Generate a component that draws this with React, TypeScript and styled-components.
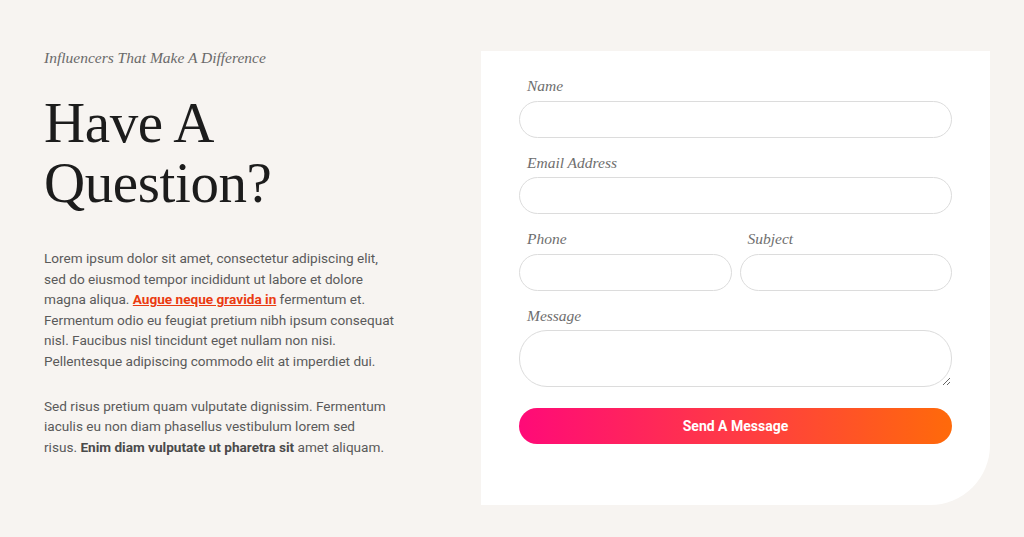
import styled, { createGlobalStyle } from "styled-components";

// page basics
const GlobalStyle = createGlobalStyle`
    body {
        margin: 0;
        background: #f7f4f1;
    }
    * { box-sizing: border-box; }
`;

const Page = styled.div`
    display: flex;
    align-items: flex-start;
    justify-content: space-between;
    width: 1024px;
    height: 537px;
    padding: 51px 34px 0 44px;
`;

const Intro = styled.div`
    width: 390px;
    margin-top: -2px;
`;

const Eyebrow = styled.div`
    font-family: "Liberation Serif", serif;
    font-style: italic;
    font-size: 15.5px;
    line-height: 18px;
    color: #6a6a6a;
`;

const Heading = styled.h1`
    margin: 26px 0 0;
    font-family: "Liberation Serif", serif;
    font-weight: 400;
    font-size: 57px;
    line-height: 60px;
    color: #1c1c1c;
    letter-spacing: -0.4px;
`;

const Text = styled.p<{ gap?: number }>`
    margin: ${(p) => p.gap ?? 0}px 0 0;
    font-family: Roboto, "Liberation Sans", sans-serif;
    font-size: 13.6px;
    line-height: 20.6px;
    color: #5a5a5a;
    white-space: nowrap;

    a {
        color: #ea3a10;
        font-weight: 700;
        text-decoration: underline;
    }
    strong {
        font-weight: 700;
        color: #4a4a4a;
    }
`;

const Card = styled.form`
    width: 509px;
    height: 454px;
    background: #ffffff;
    border-bottom-right-radius: 60px;
    padding: 24px 38px 0 38px;
    display: flex;
    flex-direction: column;
    gap: 14px;
`;

const Row = styled.div`
    display: grid;
    grid-template-columns: 1fr 1fr;
    gap: 8px;
`;

const Field = styled.label`
    display: flex;
    flex-direction: column;
`;

const Label = styled.span`
    padding-left: 8px;
    margin-bottom: 3px;
    font-family: "Liberation Serif", serif;
    font-style: italic;
    font-size: 15.5px;
    line-height: 22.5px;
    color: #6e6e6e;
`;

const Input = styled.input`
    height: 37px;
    width: 100%;
    border: 1px solid #dcdcdc;
    border-radius: 19px;
    background: #fff;
    outline: none;
    padding: 0 16px;
`;

const TextArea = styled.textarea`
    height: 57px;
    width: 100%;
    border: 1px solid #dcdcdc;
    border-radius: 28px;
    background: #fff;
    outline: none;
    padding: 10px 16px;
    resize: vertical;
`;

const SendButton = styled.button`
    margin-top: 7px;
    height: 36px;
    border: none;
    border-radius: 18px;
    background: linear-gradient(90deg, #ff0a78 0%, #ff3a45 50%, #ff6a0a 100%);
    color: #fff;
    font-family: Roboto, "Liberation Sans", sans-serif;
    font-weight: 700;
    font-size: 14px;
    cursor: pointer;
`;

const App: React.FC = () => {
    return (
        <>
            <GlobalStyle />
            <Page>
                <Intro>
                    <Eyebrow>Influencers That Make A Difference</Eyebrow>
                    <Heading>
                        Have A
                        <br />
                        Question?
                    </Heading>
                    <Text gap={35}>
                        Lorem ipsum dolor sit amet, consectetur adipiscing elit,
                        <br />
                        sed do eiusmod tempor incididunt ut labore et dolore
                        <br />
                        magna aliqua. <a href="#">Augue neque gravida in</a> fermentum et.
                        <br />
                        Fermentum odio eu feugiat pretium nibh ipsum consequat
                        <br />
                        nisl. Faucibus nisl tincidunt eget nullam non nisi.
                        <br />
                        Pellentesque adipiscing commodo elit at imperdiet dui.
                    </Text>
                    <Text gap={24}>
                        Sed risus pretium quam vulputate dignissim. Fermentum
                        <br />
                        iaculis eu non diam phasellus vestibulum lorem sed
                        <br />
                        risus. <strong>Enim diam vulputate ut pharetra sit</strong> amet aliquam.
                    </Text>
                </Intro>
                <Card onSubmit={(e) => e.preventDefault()}>
                    <Field>
                        <Label>Name</Label>
                        <Input type="text" />
                    </Field>
                    <Field>
                        <Label>Email Address</Label>
                        <Input type="email" />
                    </Field>
                    <Row>
                        <Field>
                            <Label>Phone</Label>
                            <Input type="tel" />
                        </Field>
                        <Field>
                            <Label>Subject</Label>
                            <Input type="text" />
                        </Field>
                    </Row>
                    <Field>
                        <Label>Message</Label>
                        <TextArea />
                    </Field>
                    <SendButton type="submit">Send A Message</SendButton>
                </Card>
            </Page>
        </>
    );
};

export default App;
